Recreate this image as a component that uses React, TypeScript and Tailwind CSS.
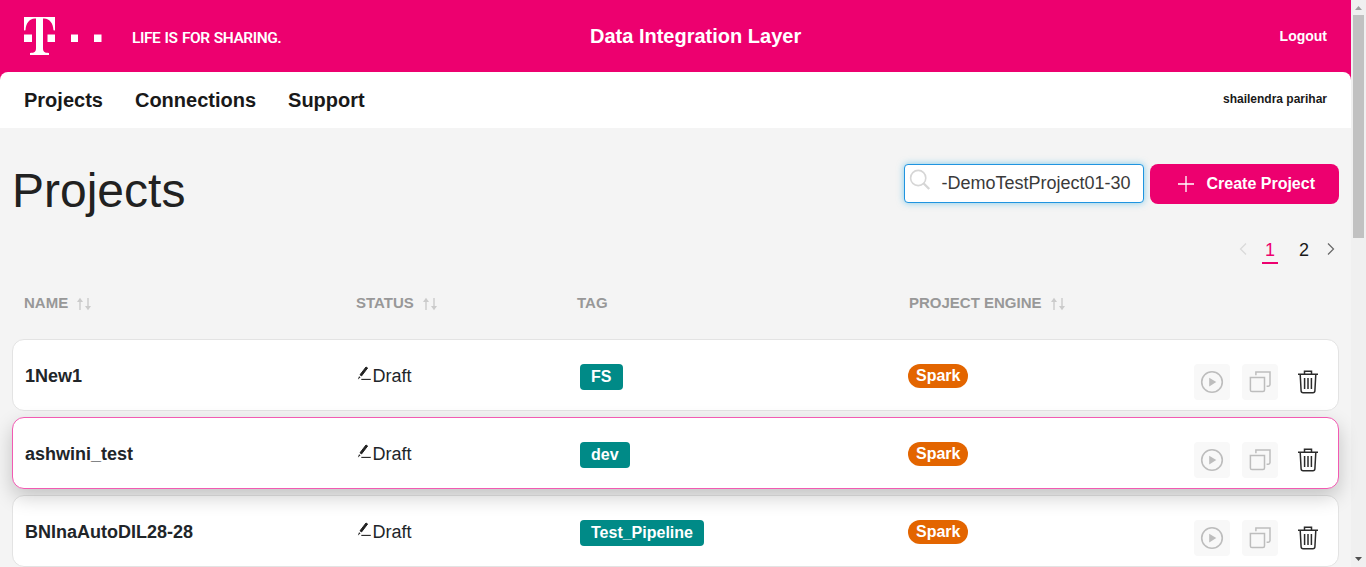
import React from "react";

type Project = { name: string; tag: string; active?: boolean };

const projects: Project[] = [
  { name: "1New1", tag: "FS" },
  { name: "ashwini_test", tag: "dev", active: true },
  { name: "BNInaAutoDIL28-28", tag: "Test_Pipeline" },
];

function Logo() {
  return (
    <svg width="78" height="38" viewBox="0 0 78 38" fill="#fff" className="block">
      <path d="M0 0H31V13.5L29.5 13.3C29 6.5 26 1.8 20 1.6H19V31C19 34.6 20 35.8 25 36V38H6V36C11 35.8 12 34.6 12 31V1.6H11C5 1.8 2 6.5 1.5 13.3L0 13.5Z" />
      <path d="M0 17.5H8V25H0ZM23.5 17.5H31V25H23.5ZM47 17.5H54V25H47ZM70 17.5H77.5V25H70Z" />
    </svg>
  );
}

function SortIcon() {
  return (
    <svg width="16" height="14" viewBox="0 0 16 14" className="mt-0.5 block" fill="#cbcbcb">
      <path d="M3.3 4H4.7V13H3.3ZM4 .8 7 5H1ZM11.3 1H12.7V10H11.3ZM12 13.2 9 9H15Z" />
    </svg>
  );
}

function PencilIcon() {
  return (
    <svg width="15" height="15" viewBox="0 0 15 15" className="block">
      <path d="M9 1 10.6 2 4.6 9.9 3 8.8Z" fill="#222" stroke="#222" strokeWidth="1" strokeLinejoin="round" />
      <path d="M2 10.2 3.5 11.2 .9 13.6Z" fill="#222" />
      <path d="M4.3 13.4H13.8" stroke="#222" strokeWidth="1.1" />
    </svg>
  );
}

function PlayIcon() {
  return (
    <svg width="24" height="24" viewBox="0 0 24 24" fill="none">
      <circle cx="12" cy="12" r="10.3" stroke="#bdbdbd" strokeWidth="1.6" />
      <path d="M9.2 7.7 16.3 12 9.2 16.4Z" fill="#bdbdbd" />
    </svg>
  );
}

function CopyIcon() {
  return (
    <svg width="24" height="24" viewBox="0 0 24 24" fill="none" stroke="#bdbdbd" strokeWidth="1.5">
      <path d="M1.6 7.6H16.5V20.1Q16.5 21.6 15 21.6H4Q2.4 21.6 2.4 20V7.6" />
      <path d="M7.9 5.2V2.1H22V14.6Q22 16.3 20.3 16.3H18.6" />
    </svg>
  );
}

function TrashIcon() {
  return (
    <svg width="24" height="24" viewBox="0 0 24 24" fill="none" stroke="#2b2b2b" strokeWidth="1.5">
      <path d="M2 4.3H22M8.5 4V1.3H15.5V4M4.2 4.3 5.1 20.8Q5.2 22.8 7.1 22.8H16.9Q18.8 22.8 18.9 20.8L19.8 4.3M8.6 8V18.9M12 8V18.9M15.4 8V18.9" />
    </svg>
  );
}

function HeaderCell({ label, sortable }: { label: string; sortable?: boolean }) {
  return (
    <div className="flex items-center gap-2 text-[15px] leading-[22px] font-bold text-[#989898]">
      {label}
      {sortable && <SortIcon />}
    </div>
  );
}

function Row({ name, tag, active }: Project) {
  return (
    <div
      className={
        "grid h-[72px] shrink-0 grid-cols-[332px_223px_328px_1fr] rounded-xl border bg-white pl-3 " +
        (active ? "relative z-10 border-[#f25ab2] shadow-[0_8px_20px_rgba(0,0,0,0.2)]" : "border-[#e3e3e3]")
      }
    >
      <div className="pt-[23px] text-[18px] leading-[27px] font-bold text-[#212529]">{name}</div>
      <div className="flex pt-[23px] text-[18px] leading-[27px] text-[#212529]">
        <span className="pt-[3px]"><PencilIcon /></span>
        <span className="ml-[0.4px]">Draft</span>
      </div>
      <div className="pt-6">
        <span className="inline-block h-[26px] min-w-[43px] rounded-[4px] bg-[#008a87] px-[11px] text-[16px] leading-[25px] font-bold text-white">{tag}</span>
      </div>
      <div className="flex justify-between pr-3">
        <span className="mt-6 h-6 rounded-full bg-[#e36500] px-2 text-[16px] leading-6 font-bold text-white">Spark</span>
        <div className="mt-6 flex gap-3">
          <button className="flex size-9 items-center justify-center rounded bg-[#f8f8f8]"><PlayIcon /></button>
          <button className="flex size-9 items-center justify-center rounded bg-[#f8f8f8]"><CopyIcon /></button>
          <button className="flex size-9 items-center justify-center"><TrashIcon /></button>
        </div>
      </div>
    </div>
  );
}

export default function App() {
  return (
    <div className="flex h-[567px] w-[1366px] overflow-hidden bg-[#f4f4f4] font-['Liberation_Sans',Arial,sans-serif] text-[#191919]">
      <div className="flex w-[1351px] flex-col">
        <div className="shrink-0 bg-[#ed006f]">
          <header className="grid h-[72px] grid-cols-[566px_1fr_auto] items-center px-6 text-white">
            <div className="flex items-center">
              <Logo />
              <span className="ml-[30px] pt-[3px] font-['Roboto',sans-serif] text-[15.5px] leading-5 font-semibold tracking-[-0.48px] whitespace-nowrap [word-spacing:1px]">LIFE IS FOR SHARING.</span>
            </div>
            <h2 className="text-[20px] leading-7 font-bold">Data Integration Layer</h2>
            <span className="text-right text-[14px] leading-5 font-bold">Logout</span>
          </header>
          <nav className="flex h-14 items-center justify-between rounded-t-lg bg-white px-6">
            <div className="flex gap-8 text-[20px] leading-7 font-bold">
              <a>Projects</a>
              <a>Connections</a>
              <a>Support</a>
            </div>
            <span className="pb-0.5 text-[12px] leading-4 font-bold">shailendra parihar</span>
          </nav>
        </div>

        <main className="flex flex-col px-3">
          <div className="flex h-[105px] items-start justify-between pt-9">
            <h1 className="pt-px text-[48px] leading-[52px] text-[#212121]">Projects</h1>
            <div className="flex gap-1.5">
              <div className="flex h-[39px] w-60 rounded border border-[#1f94e0] bg-white shadow-[0_0_7px_rgba(31,168,224,0.55)]">
                <svg width="24" height="24" viewBox="0 0 24 24" className="mt-[3px] ml-[3px]" fill="none" stroke="#d6d6d6">
                  <circle cx="10.2" cy="10" r="7.6" strokeWidth="1.6" />
                  <path d="M15.7 15.5 21.2 21" strokeWidth="2.4" />
                </svg>
                <span className="ml-[9.5px] text-[18px] leading-[37px] text-[#3a3a3a]">-DemoTestProject01-30</span>
              </div>
              <button className="flex h-10 w-[189px] items-center rounded-lg bg-[#ed006f] pl-7 text-white">
                <svg width="16" height="16" viewBox="0 0 16 16" stroke="#fff" strokeWidth="1.3"><path d="M8 0V16M0 8H16" /></svg>
                <span className="ml-[12.5px] text-[16px] leading-6 font-bold">Create Project</span>
              </button>
            </div>
          </div>

          <div className="flex h-9 items-start justify-end pt-1.5 text-[18px] leading-[22px]">
            <svg width="8" height="12" viewBox="0 0 8 12" className="mt-1" fill="none" stroke="#d9d9d9" strokeWidth="1.2"><path d="M7 .5 1.5 6 7 11.5" /></svg>
            <span className="ml-[15px] h-[25px] w-4 border-b-2 border-[#ed006f] text-center text-[#ed006f]">1</span>
            <span className="ml-[18px] w-4 text-center">2</span>
            <svg width="8" height="12" viewBox="0 0 8 12" className="mt-1 mr-1 ml-[15px]" fill="none" stroke="#666" strokeWidth="1.2"><path d="M1 .5 6.5 6 1 11.5" /></svg>
          </div>

          <div className="grid h-[70px] grid-cols-[332px_221px_332px_1fr] items-start pt-[23px] pl-3">
            <HeaderCell label="NAME" sortable />
            <HeaderCell label="STATUS" sortable />
            <HeaderCell label="TAG" />
            <HeaderCell label="PROJECT ENGINE" sortable />
          </div>

          <div className="flex flex-col gap-1.5">
            {projects.map((p) => <Row key={p.name} {...p} />)}
          </div>
        </main>
      </div>

      <div className="flex w-[15px] flex-col items-center justify-between bg-[#f0f0f0]">
        <div className="flex flex-col items-center">
          <svg width="15" height="15" viewBox="0 0 15 15"><path d="M4 10 7.5 6 11 10Z" fill="#a0a0a0" /></svg>
          <div className="h-[223px] w-[11px] bg-[#c1c1c1]" />
        </div>
        <svg width="15" height="15" viewBox="0 0 15 15"><path d="M4 5 7.5 9 11 5Z" fill="#505050" /></svg>
      </div>
    </div>
  );
}
